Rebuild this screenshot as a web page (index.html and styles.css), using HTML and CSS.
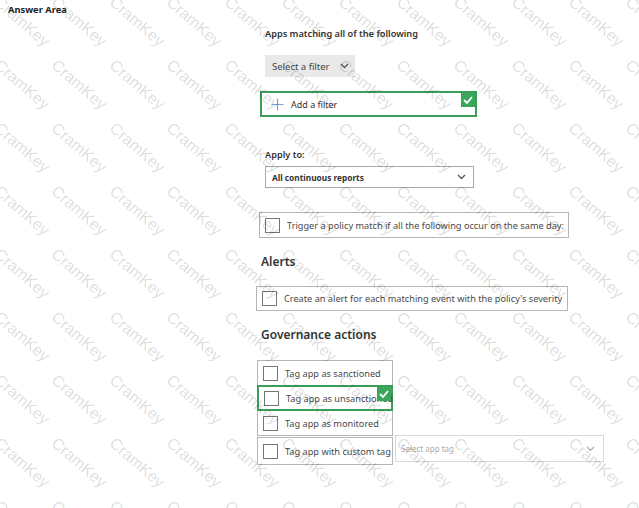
FILE: index.html
```html
<!DOCTYPE html>
<html lang="en">
<head>
  <meta charset="UTF-8">
  <meta name="viewport" content="width=device-width, initial-scale=1.0">
  <title>Answer Area</title>
  <link rel="stylesheet" href="styles.css">
</head>
<body>
  <div class="page">
    <div class="title">Answer Area</div>

    <div class="form">
      <div class="label">Apps matching all of the following</div>

      <button class="filter-btn">
        Select a filter
        <svg class="chev" width="9" height="6" viewBox="0 0 9 6"><polyline points="1,1 4.5,4.5 8,1" fill="none" stroke="#555" stroke-width="1.3"/></svg>
      </button>

      <div class="add-filter selected">
        <svg class="plus" width="13" height="13" viewBox="0 0 13 13"><path d="M6.5 0.5v12M0.5 6.5h12" stroke="#7aa3d6" stroke-width="1.2"/></svg>
        <span>Add a filter</span>
        <span class="badge"><svg width="10" height="8" viewBox="0 0 10 8"><polyline points="1,4 4,7 9,1" fill="none" stroke="#fff" stroke-width="1.8"/></svg></span>
      </div>

      <div class="label apply">Apply to:</div>
      <div class="dropdown">
        <span>All continuous reports</span>
        <svg class="chev" width="9" height="6" viewBox="0 0 9 6"><polyline points="1,1 4.5,4.5 8,1" fill="none" stroke="#555" stroke-width="1.3"/></svg>
      </div>

      <div class="option trigger">
        <span class="box"></span>
        <span>Trigger a policy match if all the following occur on the same day:</span>
      </div>

      <h2 class="heading alerts">Alerts</h2>
      <div class="option alert-row">
        <span class="box"></span>
        <span>Create an alert for each matching event with the policy's severity</span>
      </div>

      <h2 class="heading gov">Governance actions</h2>
      <div class="gov-list">
        <div class="option gov-item">
          <span class="box"></span>
          <span>Tag app as sanctioned</span>
        </div>
        <div class="option gov-item selected">
          <span class="box"></span>
          <span>Tag app as unsanctioned</span>
          <span class="badge"><svg width="10" height="8" viewBox="0 0 10 8"><polyline points="1,4 4,7 9,1" fill="none" stroke="#fff" stroke-width="1.8"/></svg></span>
        </div>
        <div class="option gov-item">
          <span class="box"></span>
          <span>Tag app as monitored</span>
        </div>
        <div class="custom-row">
          <div class="option gov-item custom">
            <span class="box"></span>
            <span>Tag app with custom tag</span>
          </div>
          <div class="tag-select">
            <span>Select app tag</span>
            <svg class="chev" width="9" height="6" viewBox="0 0 9 6"><polyline points="1,1 4.5,4.5 8,1" fill="none" stroke="#aaa" stroke-width="1.2"/></svg>
          </div>
        </div>
      </div>
    </div>
  </div>

  <div class="watermark-layer">
    <div class="watermark" id="watermark"></div>
  </div>

  <script>
    // Fill the watermark grid
    const watermark = document.getElementById('watermark');
    for (let i = 0; i < 12 * 9; i++) {
      const span = document.createElement('span');
      span.textContent = 'CramKey';
      watermark.appendChild(span);
    }
  </script>
</body>
</html>
```

FILE: styles.css
```css
html, body {
  margin: 0;
  height: 100%;
  overflow: hidden;
}
body {
  background: #fff;
  font-family: "Noto Sans", "Open Sans", sans-serif;
  color: #333;
  position: relative;
}
.page {
  padding-top: 3px;
}
.title {
  margin-left: 8px;
  font-size: 9.3px;
  line-height: 13px;
  font-weight: bold;
  color: #222;
}
.form {
  margin-left: 256px;
  width: 360px;
}
.label {
  margin: 11px 0 0 9px;
  font-size: 9.2px;
  line-height: 13px;
  font-weight: 600;
  color: #333;
}
.filter-btn {
  display: flex;
  align-items: center;
  justify-content: space-between;
  margin: 15px 0 0 9px;
  width: 90px;
  height: 22px;
  padding: 0 6px 0 7px;
  border: none;
  background: #e9e9e9;
  font-family: inherit;
  font-size: 9.5px;
  color: #444;
}
.add-filter {
  display: flex;
  align-items: center;
  gap: 7px;
  margin: 14px 0 0 4px;
  width: 217px;
  height: 26px;
  box-sizing: border-box;
  padding-left: 9px;
  font-size: 9px;
  color: #333;
}
.selected {
  position: relative;
  border: 2px solid #3a9e57 !important;
}
.badge {
  position: absolute;
  top: 0;
  right: 0;
  width: 14px;
  height: 14px;
  background: #3aa65a;
  display: flex;
  align-items: center;
  justify-content: center;
}
.apply {
  margin-top: 31px;
}
.dropdown {
  display: flex;
  align-items: center;
  justify-content: space-between;
  margin: 5px 0 0 9px;
  width: 209px;
  height: 22px;
  box-sizing: border-box;
  border: 1px solid #a8a8a8;
  padding: 0 7px 0 6px;
  font-size: 8.3px;
  font-weight: bold;
  color: #333;
}
.option {
  display: flex;
  align-items: center;
  gap: 7px;
  box-sizing: border-box;
  border: 1px solid #b5b5b5;
  padding-left: 5px;
  font-size: 9.2px;
  color: #4a4a4a;
  white-space: nowrap;
}
.box {
  flex: none;
  width: 13px;
  height: 13px;
  border: 1px solid #777;
  background: #fff;
}
.trigger {
  margin: 24px 0 0 3px;
  width: 310px;
  height: 26px;
}
.heading {
  margin: 15px 0 0 5px;
  font-size: 12px;
  line-height: 17px;
  font-weight: 600;
  color: #333;
}
.alert-row {
  margin-top: 16px;
  width: 312px;
  height: 25px;
}
.gov {
  margin-top: 15px;
}
.gov-list {
  margin: 17px 0 0 1px;
}
.gov-item {
  width: 136px;
  height: 26px;
}
.gov-item + .gov-item {
  margin-top: -1px;
}
.custom-row {
  display: flex;
  align-items: flex-end;
  margin-top: -1px;
}
.custom {
  height: 28px;
}
.tag-select {
  display: flex;
  align-items: center;
  justify-content: space-between;
  margin: 0 0 3px 2px;
  width: 209px;
  height: 27px;
  box-sizing: border-box;
  border: 1px solid #d8d8d8;
  padding: 0 8px 0 5px;
  font-size: 8px;
  color: #aaa;
}
.watermark-layer {
  position: absolute;
  inset: 0;
  overflow: hidden;
  pointer-events: none;
}
.watermark {
  display: grid;
  grid-template-columns: repeat(12, 57.4px);
  grid-auto-rows: 63px;
  margin: -6px 0 0 2px;
}
.watermark span {
  display: block;
  transform-origin: 0 0;
  transform: rotate(41deg);
  font-family: "Liberation Sans", Arial, sans-serif;
  font-size: 16px;
  line-height: 16px;
  color: rgba(0, 0, 0, 0.15);
  white-space: nowrap;
}
```
